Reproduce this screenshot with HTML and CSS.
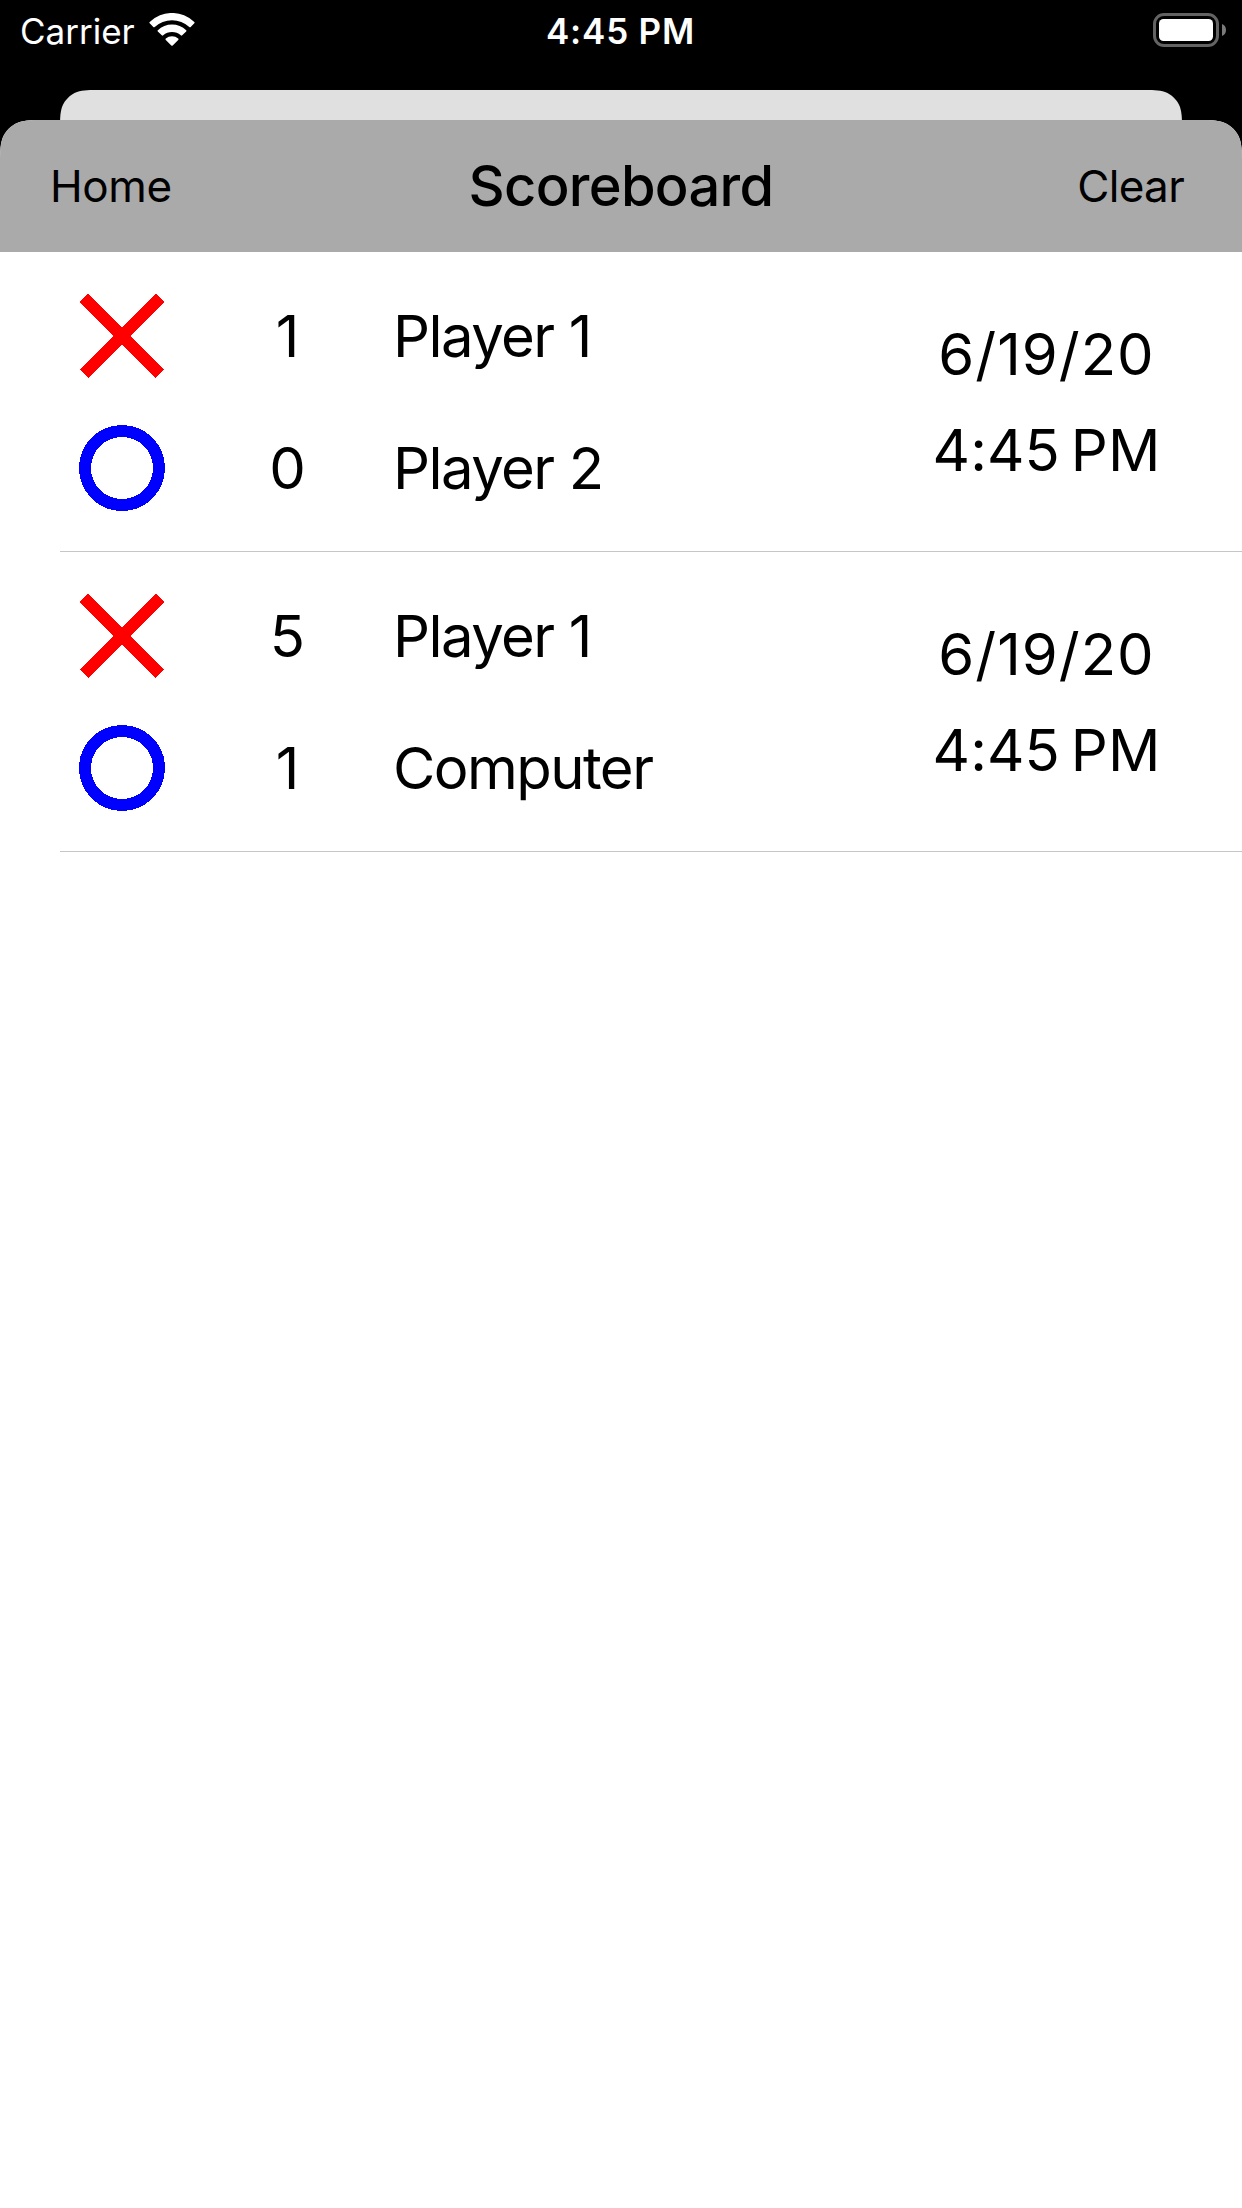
FILE: index.html
```html
<!DOCTYPE html>
<html lang="en">
<head>
<meta charset="utf-8">
<title>Scoreboard</title>
<link rel="stylesheet" href="styles.css">
</head>
<body>
<svg class="defs" width="0" height="0" aria-hidden="true">
  <symbol id="mark-x" viewBox="0 0 86 86">
    <path d="M5 5L81 81M81 5L5 81" fill="none" stroke="#f00" stroke-width="11.6" shape-rendering="crispEdges"/>
  </symbol>
  <symbol id="mark-o" viewBox="0 0 86 86">
    <circle cx="43" cy="43" r="37" fill="none" stroke="#00f" stroke-width="12" shape-rendering="crispEdges"/>
  </symbol>
</svg>

<div class="status-bar">
  <div class="status-left">
    <span class="carrier">Carrier</span>
    <svg class="wifi" width="46" height="34" viewBox="0 0 46 34" fill="#fff" aria-hidden="true">
      <path d="M.7 9A32 32 0 0 1 45.3 9Q45.9 9.700 45.3 10.300L41.700 13.900Q41 14.600 40.300 13.900A25.500 25.500 0 0 0 5.700 13.900Q5 14.600 4.300 13.900L.7 10.300Q.1 9.700 .7 9Z"/>
      <path d="M8.800 17.200A20.500 20.500 0 0 1 37.200 17.200Q37.800 17.800 37.200 18.400L33.200 22.300Q32.500 23 31.800 22.300A13.500 13.500 0 0 0 14.200 22.300Q13.500 23 12.800 22.300L8.800 18.400Q8.200 17.800 8.800 17.200Z"/>
      <path d="M16.800 25.600A9.500 9.500 0 0 1 29.200 25.600Q30 26.300 29.200 27L23.700 32.500Q23 33.200 22.300 32.500L16.800 27Q16 26.300 16.800 25.600Z"/>
    </svg>
  </div>
  <span class="clock">4:45 PM</span>
  <svg class="battery" width="73" height="34" viewBox="0 0 73 34" aria-hidden="true">
    <rect x="1.500" y="1.500" width="63" height="31" rx="9.500" fill="none" stroke="#636363" stroke-width="3"/>
    <rect x="6" y="6" width="54" height="22" rx="4.500" fill="#fff"/>
    <path d="M69 11Q73 12.500 73 17T69 23Z" fill="#7a7a7a"/>
  </svg>
</div>

<div class="back-card"></div>

<main class="sheet">
  <header class="nav">
    <span class="nav-button nav-home">Home</span>
    <h1 class="nav-title">Scoreboard</h1>
    <span class="nav-button nav-clear">Clear</span>
  </header>
  <section class="entry">
    <svg class="mark"><use href="#mark-x"/></svg>
    <span class="score">1</span>
    <span class="name">Player 1</span>
    <svg class="mark"><use href="#mark-o"/></svg>
    <span class="score">0</span>
    <span class="name">Player 2</span>
    <div class="when"><span class="date">6/19/20</span><span class="time">4:45 PM</span></div>
  </section>
  <section class="entry">
    <svg class="mark"><use href="#mark-x"/></svg>
    <span class="score">5</span>
    <span class="name">Player 1</span>
    <svg class="mark"><use href="#mark-o"/></svg>
    <span class="score">1</span>
    <span class="name">Computer</span>
    <div class="when"><span class="date">6/19/20</span><span class="time">4:45 PM</span></div>
  </section>
</main>
</body>
</html>
```
FILE: styles.css
```css
* { box-sizing: border-box; }

body {
  margin: 0;
  width: 1242px;
  height: 2208px;
  display: flex;
  flex-direction: column;
  overflow: hidden;
  background: #000;
  color: #000;
  font-family: Inter, "Liberation Sans", sans-serif;
}

svg { display: block; }
.defs { position: absolute; }

.status-bar {
  flex: none;
  height: 90px;
  padding: 13px 16px 0 20px;
  display: grid;
  grid-template-columns: 1fr auto 1fr;
  align-items: start;
  color: #fff;
  font-size: 35px;
  line-height: 37px;
}
.status-left { display: flex; gap: 14px; }
.clock { font-weight: 560; letter-spacing: .8px; margin-right: 5px; }
.battery { justify-self: end; }

/* Continuous-curvature corners, as on the system sheets */
.back-card {
  flex: none;
  height: 30px;
  margin: 0 60px;
  background: #e0e0e0;
  clip-path: path("M0 90V41.300C0 29.400 0 23.400 2 17C4.600 10.100 10.100 4.600 17 2C23.400 0 29.400 0 41.300 0H1080.700C1092.600 0 1098.600 0 1105 2C1111.900 4.600 1117.400 10.100 1120 17C1122 23.400 1122 29.400 1122 41.300V90Z");
}

.sheet {
  flex: 1;
  background: #fff;
  clip-path: path("M0 2088V45.900C0 32.700 0 26.100 2.250 18.900C5.070 11.200 11.200 5.070 18.900 2.250C26.100 0 32.700 0 45.900 0H1196.100C1209.300 0 1215.900 0 1223.100 2.250C1230.800 5.070 1236.900 11.200 1239.750 18.900C1242 26.100 1242 32.700 1242 45.900V2088Z");
}

.nav {
  height: 132px;
  padding: 0 58px 0 50px;
  display: grid;
  grid-template-columns: 1fr auto 1fr;
  align-items: center;
  background: #aaa;
}
.nav-button { font-size: 44px; line-height: 52px; }
.nav-home { letter-spacing: -.4px; }
.nav-clear { justify-self: end; letter-spacing: -.7px; }
.nav-title {
  margin: 0 0 0 8px;
  font-size: 56px;
  line-height: 68px;
  font-weight: 500;
  letter-spacing: -.7px;
}

.entry {
  height: 300px;
  margin-left: 60px;
  padding-top: 18px;
  display: grid;
  grid-template-columns: 124px 207px 460px 1fr;
  grid-template-rows: 132px 132px;
  align-items: center;
  border-bottom: 1px solid #c6c6c8;
  font-size: 58px;
  line-height: 96px;
}
.mark { width: 86px; height: 86px; justify-self: center; }
.score { text-align: center; }
.name { padding-left: 2px; letter-spacing: -1.550px; word-spacing: .3px; }
.when {
  grid-column: 4;
  grid-row: 1 / 3;
  display: flex;
  flex-direction: column;
  align-items: center;
}
.date { letter-spacing: 1px; }
.time { letter-spacing: .1px; word-spacing: -5.500px; }
```
